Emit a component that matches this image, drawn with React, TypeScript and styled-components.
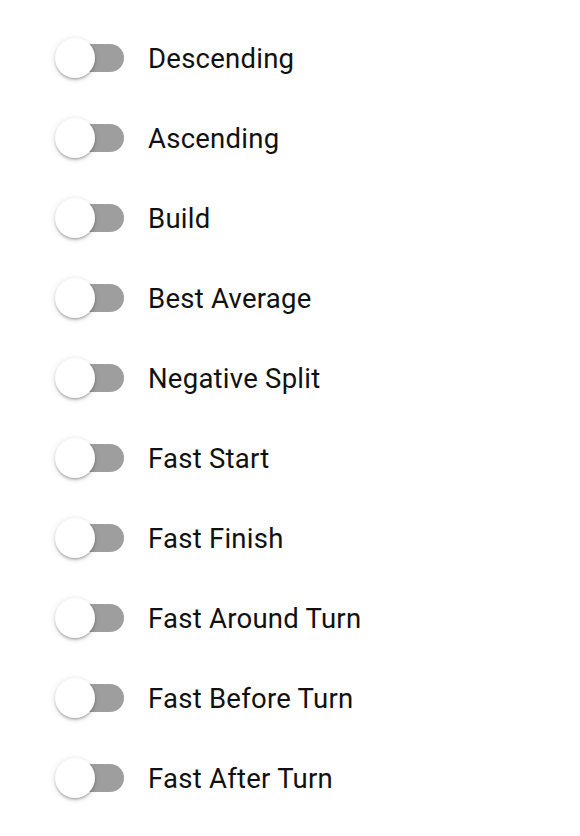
import styled, { createGlobalStyle } from "styled-components";

const GlobalStyle = createGlobalStyle`
  body {
    margin: 0;
    background: #ffffff;
    font-family: Roboto, "Noto Sans", sans-serif;
  }
`;

const List = styled.div`
  display: flex;
  flex-direction: column;
  padding: 18px 0 0 55px;
`;

const Row = styled.label`
  display: flex;
  align-items: center;
  height: 80px;
  gap: 24px;
  cursor: pointer;
`;

const Switch = styled.span`
  position: relative;
  display: inline-block;
  width: 69px;
  height: 40px;
  flex: none;
`;

const Track = styled.span`
  position: absolute;
  left: 3px;
  right: 0;
  top: 6px;
  height: 28px;
  border-radius: 14px;
  background: #9e9e9e;
`;

const Thumb = styled.span`
  position: absolute;
  left: 0;
  top: 0;
  width: 40px;
  height: 40px;
  border-radius: 50%;
  background: #ffffff;
  box-shadow: 0 2px 2px -1px rgba(0, 0, 0, 0.2), 0 2px 3px 0 rgba(0, 0, 0, 0.16),
    0 1px 7px 0 rgba(0, 0, 0, 0.12);
`;

const Label = styled.span`
  font-size: 27.5px;
  color: #111111;
  letter-spacing: 0.25px;
  padding-top: 1px;
`;

const options = [
  "Descending",
  "Ascending",
  "Build",
  "Best Average",
  "Negative Split",
  "Fast Start",
  "Fast Finish",
  "Fast Around Turn",
  "Fast Before Turn",
  "Fast After Turn",
];

export default function App() {
  return (
    <>
      <GlobalStyle />
      <List>
        {options.map((name) => (
          <Row key={name}>
            <Switch>
              <Track />
              <Thumb />
            </Switch>
            <Label>{name}</Label>
          </Row>
        ))}
      </List>
    </>
  );
}
